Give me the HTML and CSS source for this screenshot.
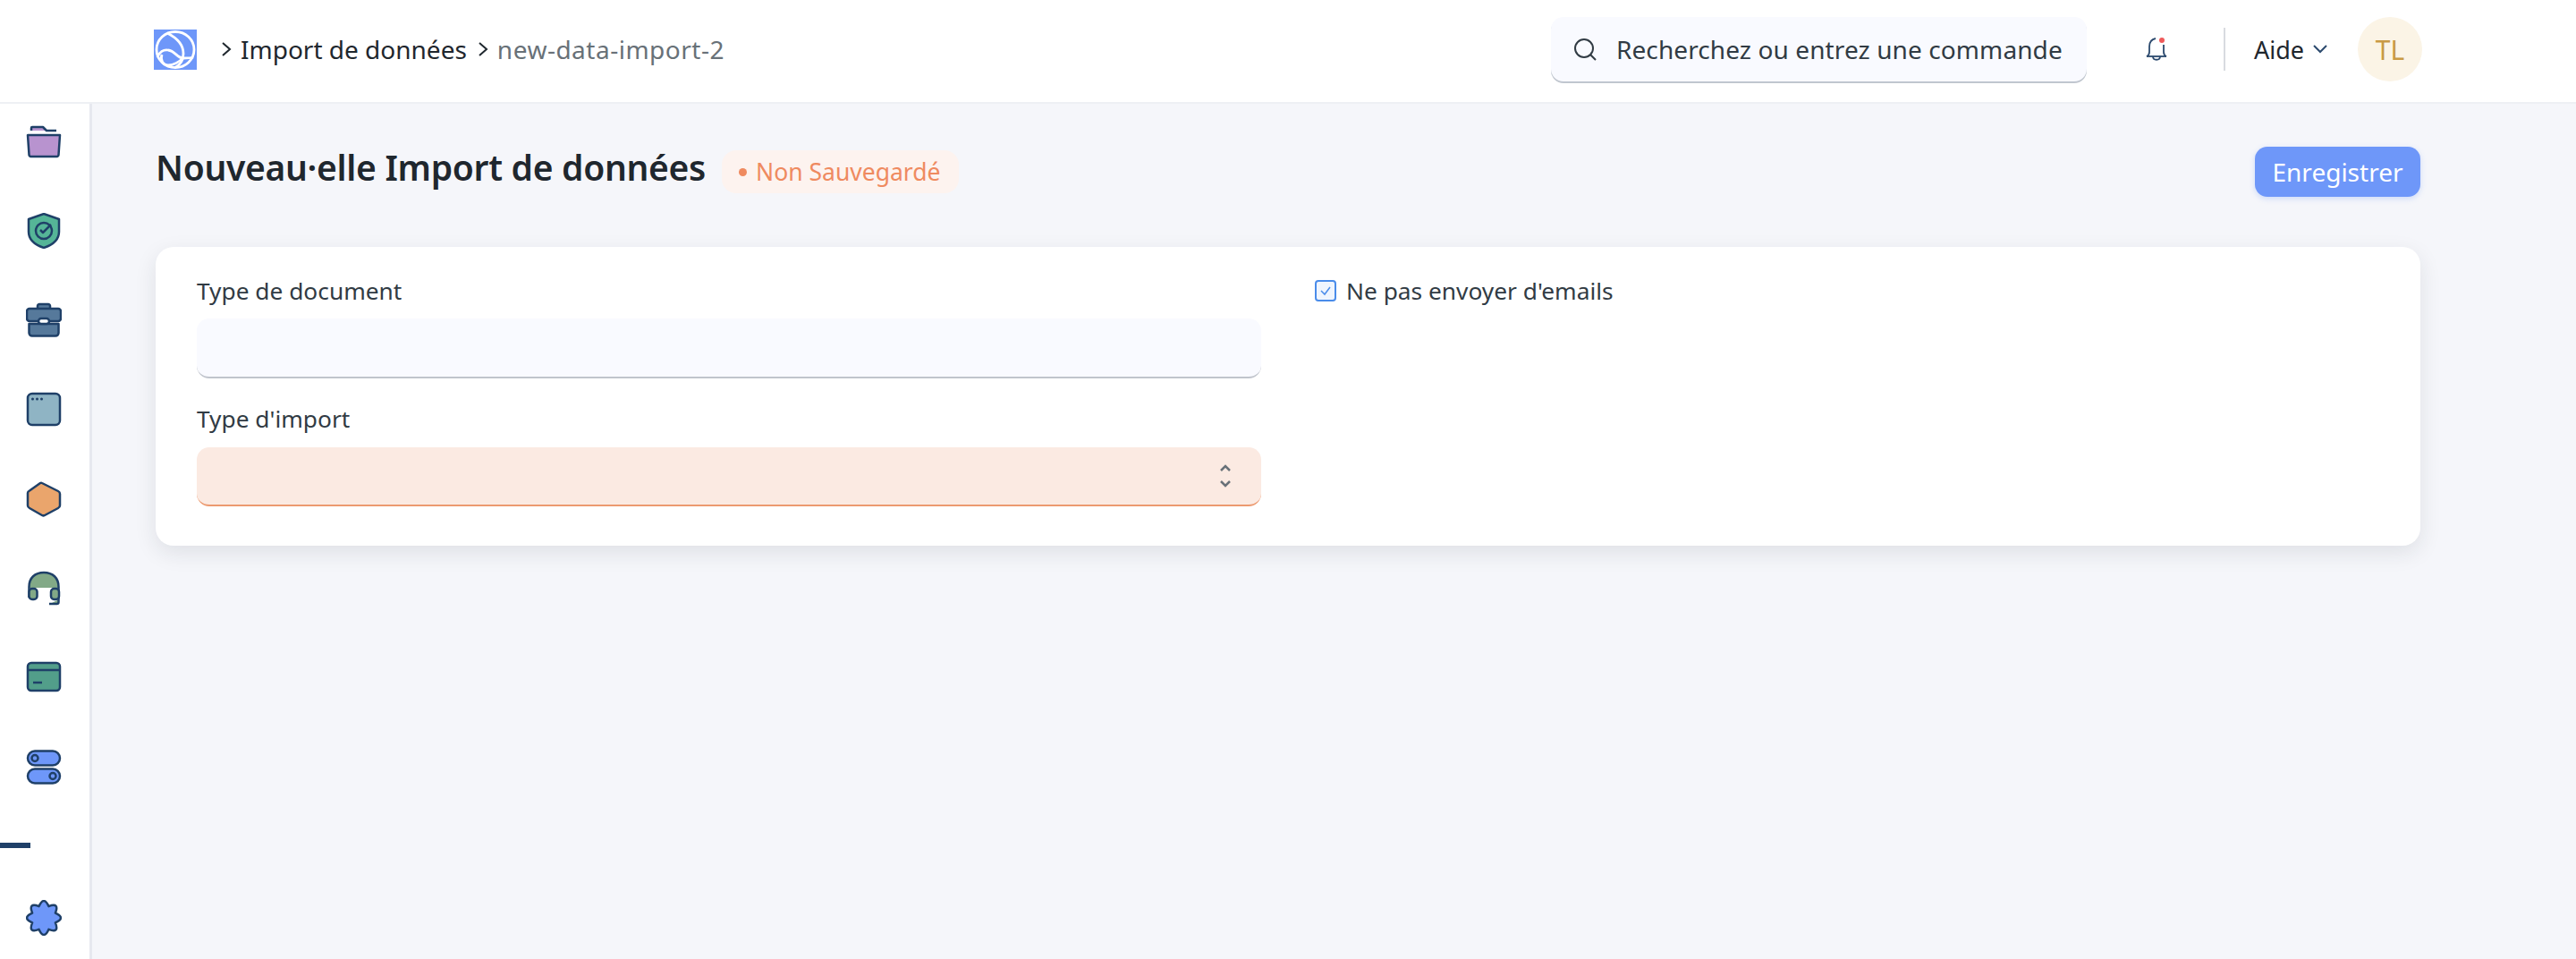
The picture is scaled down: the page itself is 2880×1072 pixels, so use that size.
FILE: index.html
```html
<!DOCTYPE html>
<html lang="fr">
<head>
    <meta charset="UTF-8">
    <title>Import de données</title>
    <link rel="stylesheet" href="styles.css">
</head>
<body>
    <header class="navbar">
        <svg class="logo" viewBox="0 0 48 45">
            <rect width="48" height="45" fill="#6e97f9"/>
            <g fill="none" stroke="#fff" stroke-width="2.800">
                <ellipse cx="24" cy="22.500" rx="21" ry="20"/>
                <path d="M15 4c10 5 18 13 18 23 0 8-4 13-10 16"/>
                <path d="M4 31c2-6 7-9 12-8 8 1 10 9 17 9 4 0 8 0 11-1"/>
                <path d="M9 28c-2 6 1 12 7 12 6 0 13-4 17-9"/>
            </g>
        </svg>
        <nav class="crumbs">
            <svg class="crumb-sep" viewBox="0 0 12 20"><path d="M2 3l8 7-8 7"/></svg>
            <a class="crumb">Import de données</a>
            <svg class="crumb-sep" viewBox="0 0 12 20"><path d="M2 3l8 7-8 7"/></svg>
            <span class="crumb crumb-current">new-data-import-2</span>
        </nav>
        <div class="search">
            <svg class="search-icon" viewBox="0 0 26 26"><circle cx="12" cy="12" r="10"/><path d="M19 19l6 6"/></svg>
            <span>Recherchez ou entrez une commande</span>
        </div>
        <svg class="bell" viewBox="0 0 24 26">
            <path d="M1 21c2-1 3-3 3-5v-6c0-4 2-8 7-9"/>
            <path d="M20 8v8c0 2 1 4 3 5"/>
            <path d="M1 21h22"/>
            <path d="M8 21c0 5 8 5 8 0"/>
            <circle class="bell-dot" cx="18" cy="3" r="3"/>
        </svg>
        <div class="nav-divider"></div>
        <div class="help">
            <span>Aide</span>
            <svg viewBox="0 0 16 10"><path d="M1 1l7 7 7-7"/></svg>
        </div>
        <div class="avatar">TL</div>
    </header>

    <div class="layout">
        <aside class="sidebar">
            <svg class="side-icon" viewBox="0 0 40 40">
                <path class="fill-purple no-line" d="M7 5h12l3 3H7z"/>
                <path class="fill-purple" d="M2 13h36l-1.500 22c0 1-1 2-2 2H5.500c-1 0-2-1-2-2z"/>
                <path d="M6 8V5c0-.5.5-1 1-1h12l4 4h11"/>
            </svg>
            <svg class="side-icon" viewBox="0 0 40 40">
                <path class="fill-green" d="M20 1L37 7v14c0 9-8 15-17 18C11 36 3 30 3 21V7z"/>
                <circle cx="20" cy="20" r="9"/>
                <path d="M16 19l3 3 9-9"/>
            </svg>
            <svg class="side-icon" viewBox="0 0 40 40">
                <path class="fill-slate" d="M13 7V4c0-1 1-2 2-2h10c1 0 2 1 2 2v3"/>
                <rect class="fill-slate" x="1" y="7" width="38" height="14" rx="3"/>
                <path class="fill-slate" d="M3.500 24v10c0 2 1.500 3.500 3.500 3.500h26c2 0 3.500-1.500 3.500-3.500V24z"/>
                <rect class="fill-white" x="14" y="18" width="12" height="6" rx="3"/>
            </svg>
            <svg class="side-icon" viewBox="0 0 40 40">
                <rect class="fill-blue-grey" x="2" y="2" width="36" height="35" rx="5"/>
                <circle class="dot" cx="7.500" cy="8" r="1.500"/>
                <circle class="dot" cx="12.500" cy="8" r="1.500"/>
                <circle class="dot" cx="17.500" cy="8" r="1.500"/>
            </svg>
            <svg class="side-icon" viewBox="0 0 40 40">
                <path class="fill-orange" d="M18 2l18 9c1 .5 2 1.500 2 3v13c0 1-1 2.500-2 3l-15 8c-1 .5-2 .5-3 0L4 30c-1-.5-2-2-2-3V13c0-1 1-2 2-2.500L16 2c.5-.3 1.500-.3 2 0z"/>
            </svg>
            <svg class="side-icon" viewBox="0 0 40 40">
                <path class="fill-sage no-line" d="M4 19C4 8 10 2 20 2s16 6 16 17z"/>
                <path class="fill-sage no-line" d="M27 37h8c1.500 0 2-1 2-2v-3z"/>
                <path d="M3.500 30V18C3.500 8 10 2 20 2s16.500 6 16.500 16v17c0 1.500-1 2-2 2H26"/>
                <rect class="fill-sage" x="3.500" y="20" width="9" height="12" rx="3.500"/>
                <rect class="fill-sage" x="28" y="20" width="9" height="12" rx="3.500"/>
            </svg>
            <svg class="side-icon" viewBox="0 0 40 40">
                <rect class="fill-teal" x="2" y="3" width="36" height="31" rx="4"/>
                <path d="M2 11h36"/>
                <path d="M8 25h10"/>
            </svg>
            <svg class="side-icon" viewBox="0 0 40 40">
                <rect class="fill-blue" x="2" y="1.500" width="36" height="16" rx="8"/>
                <rect class="fill-blue" x="2" y="21.500" width="36" height="16" rx="8"/>
                <circle class="fill-blue" cx="10" cy="9.500" r="3.500"/>
                <circle class="fill-blue" cx="30" cy="29.500" r="3.500"/>
            </svg>
            <div class="side-dash"></div>
            <svg class="side-icon" viewBox="0 0 40 40">
                <path class="fill-blue" d="M25.400 7.100Q20-5 14.600 7.100Q2.300 2.300 7.100 14.600Q-5 20 7.100 25.400Q2.300 37.700 14.600 32.900Q20 45 25.400 32.900Q37.700 37.700 32.900 25.400Q45 20 32.900 14.600Q37.700 2.300 25.400 7.100z"/>
            </svg>
        </aside>

        <main class="main">
            <div class="page-head">
                <div class="title-row">
                    <h1 class="page-title">Nouveau·elle Import de données</h1>
                    <span class="status"><i class="status-dot"></i>Non Sauvegardé</span>
                </div>
                <button class="btn-save" type="button">Enregistrer</button>
            </div>

            <section class="card">
                <div class="col">
                    <label class="field-label">Type de document</label>
                    <div class="control"></div>
                    <label class="field-label field-label-next">Type d'import</label>
                    <div class="control control-required">
                        <svg class="select-arrows" viewBox="0 0 14 26"><path d="M2 7l5-5 5 5"/><path d="M2 19l5 5 5-5"/></svg>
                    </div>
                </div>
                <div class="col">
                    <div class="check-row">
                        <span class="checkbox">
                            <svg viewBox="0 0 14 12"><path d="M2 6l4 4 6-8"/></svg>
                        </span>
                        <span class="field-label">Ne pas envoyer d'emails</span>
                    </div>
                </div>
            </section>
        </main>
    </div>
</body>
</html>
```

FILE: styles.css
```css
* {
    box-sizing: border-box;
}

html, body {
    height: 100%;
}

body {
    margin: 0;
    display: flex;
    flex-direction: column;
    background-color: #f5f6fa;
    color: #1f272e;
    font-family: "Noto Sans", sans-serif;
    overflow: hidden;
}

.navbar {
    display: flex;
    align-items: center;
    height: 116px;
    flex-shrink: 0;
    padding: 0 172px 4px 172px;
    background-color: #fff;
    border-bottom: 2px solid #eef0f4;
}

.logo {
    width: 48px;
    height: 45px;
}

.crumbs {
    display: flex;
    align-items: center;
    margin-left: 27px;
    margin-right: auto;
    font-size: 28px;
}

.crumb-sep {
    width: 12px;
    height: 20px;
    fill: none;
    stroke: #1f272e;
    stroke-width: 2;
}

.crumb {
    margin: 0 12px 0 10px;
    color: #1f272e;
}

.crumb-current {
    color: #687178;
    letter-spacing: 0.5px;
}

.search {
    display: flex;
    align-items: center;
    width: 599px;
    height: 72px;
    padding-left: 25px;
    border-radius: 14px;
    background-color: #f9faff;
    box-shadow: 0 2px 0 #c0c6cf;
    font-size: 28px;
    letter-spacing: 0.1px;
    color: #313b44;
    white-space: nowrap;
}

.search-icon {
    width: 26px;
    height: 26px;
    margin-right: 22px;
    fill: none;
    stroke: #313b44;
    stroke-width: 2;
}

.bell {
    width: 24px;
    height: 26px;
    margin-left: 66px;
    fill: none;
    stroke: #2c4a6e;
    stroke-width: 1.800;
}

.bell-dot {
    fill: #ef5a5a;
    stroke: none;
}

.nav-divider {
    width: 2px;
    height: 48px;
    margin-left: 63px;
    background-color: #d8dbe0;
}

.help {
    display: flex;
    align-items: center;
    gap: 10px;
    margin-left: 32px;
    font-size: 27px;
}

.help svg {
    width: 16px;
    height: 10px;
    fill: none;
    stroke: #2c4a6e;
    stroke-width: 2;
}

.avatar {
    display: flex;
    align-items: center;
    justify-content: center;
    width: 72px;
    height: 72px;
    margin-left: 34px;
    border-radius: 50%;
    background-color: #fbf4e6;
    color: #c99a45;
    font-size: 30px;
}

.layout {
    display: flex;
    flex: 1;
    min-height: 0;
}

.sidebar {
    display: flex;
    flex-direction: column;
    align-items: center;
    gap: 60px;
    width: 103px;
    flex-shrink: 0;
    padding: 22px 3px 0 0;
    background-color: #fff;
    border-right: 3px solid #e6e8ef;
}

.side-icon {
    width: 40px;
    height: 40px;
    flex-shrink: 0;
    fill: none;
    stroke: #1f4068;
    stroke-width: 2.500;
    stroke-linejoin: round;
}

.side-dash {
    align-self: flex-start;
    width: 34px;
    height: 6px;
    margin-top: 4px;
    margin-bottom: -2px;
    background-color: #1f4068;
}

.fill-purple { fill: #b893cf; }
.fill-green { fill: #55b597; }
.fill-slate { fill: #56799b; }
.fill-white { fill: #fff; }
.fill-blue-grey { fill: #8fb4c4; }
.fill-orange { fill: #eaa56c; }
.fill-sage { fill: #82a987; }
.fill-teal { fill: #529e8a; }
.fill-blue { fill: #6e97f9; }
.dot { fill: #1f4068; stroke: none; }
.no-line { stroke: none; }

.main {
    flex: 1;
    padding: 48px 174px 0 71px;
}

.page-head {
    display: flex;
    align-items: center;
    justify-content: space-between;
    height: 56px;
}

.title-row {
    display: flex;
    align-items: center;
    gap: 18px;
}

.page-title {
    height: 56px;
    margin: 0;
    font-size: 39px;
    font-weight: 600;
    letter-spacing: -0.3px;
    line-height: 46px;
    color: #1f272e;
}

.status {
    display: flex;
    align-items: center;
    height: 48px;
    padding: 0 20px 0 19px;
    border-radius: 16px;
    background-color: #fdf3ef;
    color: #ef8a5f;
    font-size: 26.5px;
}

.status-dot {
    width: 9px;
    height: 9px;
    margin-right: 10px;
    border-radius: 50%;
    background-color: #ef8a5f;
}

.btn-save {
    height: 56px;
    width: 185px;
    border: none;
    border-radius: 14px;
    background-color: #6e97f9;
    color: #fff;
    font-family: inherit;
    font-size: 28px;
    box-shadow: 0 2px 6px rgba(110, 151, 249, 0.3);
}

.card {
    display: grid;
    grid-template-columns: 1fr 1fr;
    gap: 60px;
    margin-top: 56px;
    padding: 32px 46px 44px 46px;
    border-radius: 20px;
    background-color: #fff;
    box-shadow: 0 8px 24px rgba(31, 39, 46, 0.1);
}

.field-label {
    display: block;
    height: 34px;
    margin-bottom: 14px;
    font-size: 26.3px;
    line-height: 34px;
    color: #313b44;
}

.field-label-next {
    margin-top: 28px;
    margin-bottom: 15px;
}

.control {
    height: 67px;
    border-radius: 14px;
    background-color: #f9faff;
    border-bottom: 2px solid #c0c4cc;
}

.control-required {
    display: flex;
    align-items: center;
    justify-content: flex-end;
    height: 66px;
    padding-right: 33px;
    background-color: #fbeae2;
    border-bottom-color: #ec9a70;
}

.select-arrows {
    width: 14px;
    height: 26px;
    fill: none;
    stroke: #687178;
    stroke-width: 2.500;
}

.check-row {
    display: flex;
    align-items: center;
    gap: 11px;
    height: 34px;
}

.check-row .field-label {
    margin: 0;
}

.checkbox {
    display: flex;
    align-items: center;
    justify-content: center;
    width: 24px;
    height: 24px;
    border: 2px solid #4a8cea;
    border-radius: 4px;
    background-color: #eff5fe;
}

.checkbox svg {
    width: 14px;
    height: 12px;
    fill: none;
    stroke: #4a8cea;
    stroke-width: 1.500;
}
```
